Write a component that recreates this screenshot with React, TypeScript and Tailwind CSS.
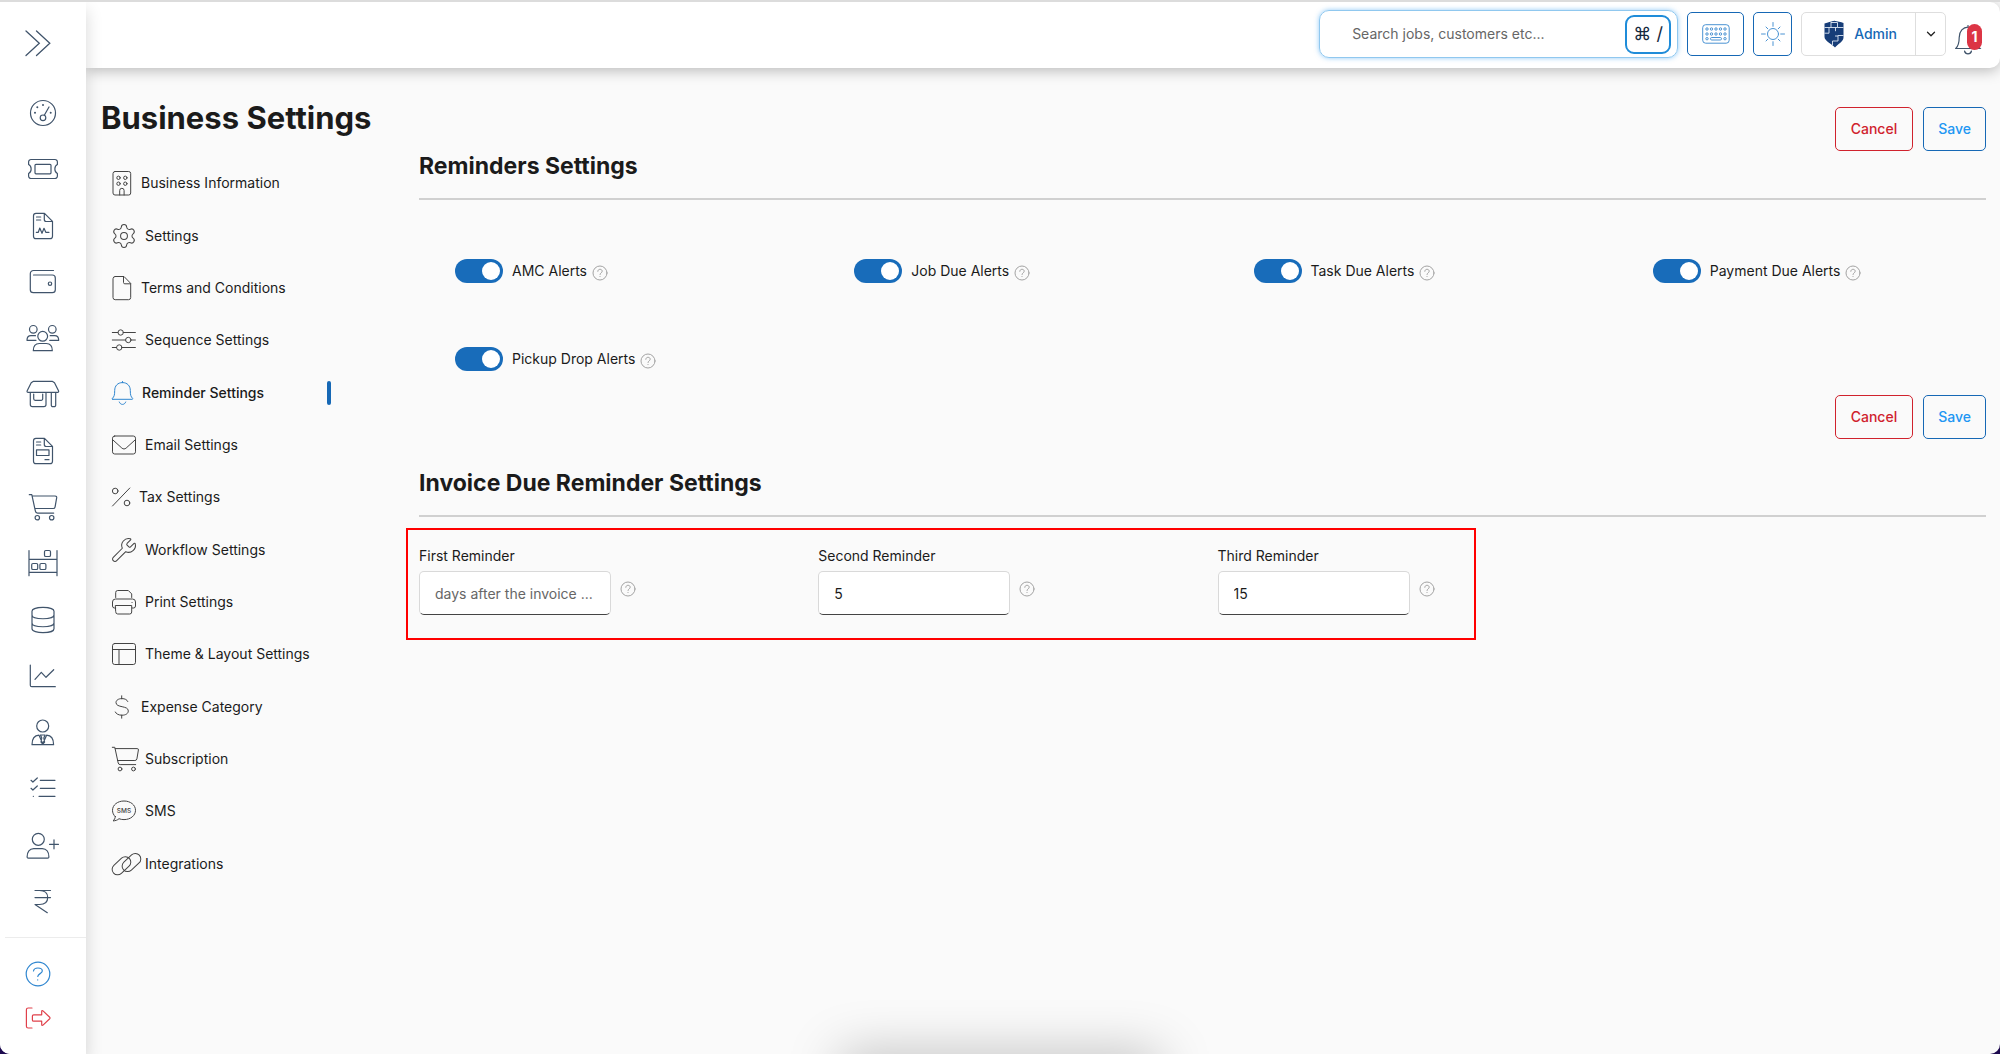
import { useState, type ReactNode } from 'react'
import { ChevronDown, Settings, Wrench } from 'lucide-react'

// Sidebar icons share a 32px box
function NavIcon({ children }: { children: ReactNode }) {
  return (
    <svg
      viewBox="0 0 32 32"
      className="w-8 h-8 overflow-visible"
      fill="none"
      stroke="currentColor"
      strokeWidth="1.2"
      strokeLinecap="round"
      strokeLinejoin="round"
      aria-hidden="true"
    >
      {children}
    </svg>
  )
}

function MenuIcon({ w = 24, children }: { w?: number; children: ReactNode }) {
  return (
    <svg
      width={w}
      height={24}
      viewBox={`0 0 ${w} 24`}
      className="shrink-0 overflow-visible"
      fill="none"
      stroke="currentColor"
      strokeWidth="1"
      strokeLinecap="round"
      strokeLinejoin="round"
      aria-hidden="true"
    >
      {children}
    </svg>
  )
}

const filePath = 'M9 3.3h8.5l8 8v14.9a2.5 2.5 0 0 1-2.5 2.5H9a2.5 2.5 0 0 1-2.5-2.5V5.8A2.5 2.5 0 0 1 9 3.3zM17.3 3.5v6a2 2 0 0 0 2 2h6M9.5 7h4.2M9.5 10h4.2'

const navItems = [
  {
    label: 'Dashboard',
    icon: (
      <>
        <circle cx="16" cy="16" r="12.5" />
        <circle cx="16" cy="20.8" r="2.8" />
        <path d="M17.3 18.2 22 10" />
        <g fill="currentColor" stroke="none">
          <circle cx="8" cy="15.7" r="1" />
          <circle cx="10.3" cy="10.2" r="1" />
          <circle cx="16" cy="8" r="1" />
          <circle cx="23.7" cy="15.7" r="1" />
        </g>
      </>
    ),
  },
  {
    label: 'Jobs',
    icon: (
      <>
        <path d="M4 6.5h24a2.4 2.4 0 0 1 2.4 2.4v2.6c-3.4 1.6-3.4 7.4 0 9v2.6a2.4 2.4 0 0 1-2.4 2.4H4a2.4 2.4 0 0 1-2.4-2.4v-2.6c3.4-1.6 3.4-7.4 0-9V8.9A2.4 2.4 0 0 1 4 6.5z" />
        <rect x="8" y="11.3" width="16" height="9.5" rx="1" />
      </>
    ),
  },
  {
    label: 'Quotations',
    icon: (
      <>
        <path d={filePath} />
        <path d="M9.3 22.3h2l1.5-4.3 2.2 5.3 2-5 1.8 4h3.2" />
      </>
    ),
  },
  {
    label: 'Payments',
    icon: (
      <>
        <path d="M26.5 4.5H6.5a3.2 3.2 0 0 0-3.2 3.2v16a3 3 0 0 0 3 3h19a3 3 0 0 0 3-3V12a3 3 0 0 0-3-3H6.5" />
        <circle cx="23" cy="17.7" r="1.7" />
      </>
    ),
  },
  {
    label: 'Customers',
    icon: (
      <>
        <circle cx="15.7" cy="14.3" r="4.9" />
        <circle cx="6.3" cy="7.3" r="3.8" />
        <circle cx="25.3" cy="7.3" r="3.8" />
        <path d="M6.3 28.7c0-5 2.5-7.2 6-7.2h7c3.5 0 6 2.2 6 7.2zM9 18.3H0c0-3 1.6-4.6 4-4.6h4.5M22.7 18.3h9c0-3-1.6-4.6-4-4.6h-4.5" />
      </>
    ),
  },
  {
    label: 'Outlets',
    icon: (
      <path d="M6.5 3.3h18.7l2.3 1.5 4 8c.4.9 0 1.6-1 1.6H1.2c-1 0-1.4-.7-1-1.6l4-8zM3.3 14.5v12a2.2 2.2 0 0 0 2.2 2.2h11.3a2.2 2.2 0 0 0 2.2-2.2v-12M6.7 16v4.8a1.5 1.5 0 0 0 1.5 1.5h6a1.5 1.5 0 0 0 1.5-1.5V16M24.3 14.5v12.7a1.5 1.5 0 0 0 1.5 1.5h1.4a1.5 1.5 0 0 0 1.5-1.5V14.5" />
    ),
  },
  {
    label: 'Invoices',
    icon: (
      <>
        <path d={filePath} />
        <path d="M9.5 14.9h12.5v5.6H9.5zM18 24.7h4" />
      </>
    ),
  },
  {
    label: 'Sales',
    icon: (
      <>
        <path d="M2.3 3.7h2.5l3.6 16.5a2.2 2.2 0 0 0 2.2 1.9h16.1M5.3 5h22.9a1.5 1.5 0 0 1 1.5 1.7l-1.6 9.1a2 2 0 0 1-2 1.7H7.9" />
        <circle cx="10.3" cy="26.7" r="2.2" />
        <circle cx="24.7" cy="26.7" r="2.2" />
      </>
    ),
  },
  {
    label: 'Inventory',
    icon: (
      <>
        <path d="M2 3.5v25.2M30 3.5v25.2M2 12.3h28M2 25.3h28" />
        <rect x="17.5" y="3.5" width="6" height="6" rx="1.3" />
        <rect x="4.7" y="16.5" width="6" height="6" rx="1.3" />
        <rect x="12.9" y="16.5" width="6" height="6" rx="1.3" />
      </>
    ),
  },
  {
    label: 'Data',
    icon: (
      <path d="M5 7.3c0-5.3 22-5.3 22 0v17.4c0 5.3-22 5.3-22 0zM5 11c0 5 22 5 22 0M5 19c0 5 22 5 22 0" />
    ),
  },
  {
    label: 'Reports',
    icon: <path d="M3.3 5v20.2a1.5 1.5 0 0 0 1.5 1.5h23.5M8 19.3l6.3-7 4.7 5 7.7-7.6" />,
  },
  {
    label: 'Employees',
    icon: (
      <>
        <circle cx="15.7" cy="10" r="6" />
        <path d="M5 28.7c0-6 2.3-9.2 7-9.5l3.8 8.5 3.8-8.5c4.7.3 7 3.5 7 9.5zM13.5 19h4.6l-1.3 3 .8 4-1.8 2.2-1.800-2.200.8-4z" />
      </>
    ),
  },
  {
    label: 'Tasks',
    icon: (
      <path d="M13.3 8.3H28M13.3 16.3H28M12 24.3h16M4 8.3 5.9 10l4.400-4M4 16.3 5.9 18l4.400-4M6.3 24.3h.1" />
    ),
  },
  {
    label: 'Leads',
    icon: (
      <>
        <circle cx="11.3" cy="10.3" r="6" />
        <path d="M1.3 29.2h19.4c.8 0 1.2-.4 1.2-1.2 0-5-2.5-8.3-6.6-8.3H6.7C2.6 19.7.1 23 .1 28c0 .8.4 1.2 1.2 1.2zM27 10.8v9M22.5 15.3h9" />
      </>
    ),
  },
  {
    label: 'Expenses',
    icon: <path d="M8 5.5h15.5M8 12.6h15.5M12.5 5.5c5 0 8.2 2.5 8.2 7s-3.2 7-8.2 7H8l12.3 8.2" />,
  },
]

const menuItems = [
  {
    label: 'Business Information',
    icon: (
      <MenuIcon w={20}>
        <rect x="1" y="0.5" width="17.7" height="23.5" rx="2" />
        <circle cx="6.5" cy="6.8" r="1.7" />
        <circle cx="13.3" cy="6.8" r="1.7" />
        <circle cx="6.5" cy="12.7" r="1.7" />
        <circle cx="13.3" cy="12.7" r="1.7" />
        <path d="M7.7 24v-4.5a2.2 2.2 0 0 1 4.4 0V24" />
      </MenuIcon>
    ),
  },
  {
    label: 'Settings',
    icon: <Settings width={24} height={24} viewBox="1.5 1.5 21 21" strokeWidth={0.9} className="shrink-0 overflow-visible" />,
  },
  {
    label: 'Terms and Conditions',
    icon: (
      <MenuIcon w={20}>
        <path d="M3.2.5h8.8l6.7 6.9v14.1a2.2 2.2 0 0 1-2.2 2.2H3.2A2.2 2.2 0 0 1 1 21.5V2.7A2.2 2.2 0 0 1 3.2.5zM11.5.7v5.8c0 .8.5 1.3 1.3 1.3h5.7" />
      </MenuIcon>
    ),
  },
  {
    label: 'Sequence Settings',
    icon: (
      <MenuIcon>
        <path d="M.3 4.5H6M11.4 4.5h12M.3 12h13.3M19 12h4.4M.3 19.5h4.3M10 19.5h13.4" />
        <circle cx="8.7" cy="4.5" r="2.7" />
        <circle cx="16.3" cy="12" r="2.7" />
        <circle cx="7.3" cy="19.5" r="2.7" />
      </MenuIcon>
    ),
  },
  {
    label: 'Reminder Settings',
    active: true,
    icon: (
      <MenuIcon w={21}>
        <path d="M10.5.5v1.2M.8 18.3h19.4c.6 0 .8-.5.4-.9-1.9-1.9-2.3-3.7-2.3-7.8 0-4.8-3-8-7.8-8s-7.8 3.2-7.8 8c0 4.1-.4 5.9-2.3 7.8-.4.4-.2.9.4.9zM7.3 21c.6 1.500 1.700 2.400 3.200 2.400s2.600-.9 3.200-2.400" />
      </MenuIcon>
    ),
  },
  {
    label: 'Email Settings',
    icon: (
      <MenuIcon>
        <rect x="0.5" y="3" width="23" height="18" rx="2.2" />
        <path d="m1.3 7.3 8.5 7.7c1.5 1.3 2.9 1.3 4.4 0l8.5-7.7" />
      </MenuIcon>
    ),
  },
  {
    label: 'Tax Settings',
    icon: (
      <MenuIcon w={18}>
        <circle cx="3.2" cy="6" r="2.8" />
        <circle cx="15" cy="18" r="2.8" />
        <path d="M.5 21 17.8 3" />
      </MenuIcon>
    ),
  },
  {
    label: 'Workflow Settings',
    icon: <Wrench width={24} height={24} viewBox="1.5 1.5 21 21" strokeWidth={0.9} className="shrink-0 overflow-visible" />,
  },
  {
    label: 'Print Settings',
    icon: (
      <MenuIcon>
        <path d="M3.7 7.5v-5A2 2 0 0 1 5.7.5h10.6l3.4 3.4v3.6M3.7 18H2.5a2 2 0 0 1-2-2v-4a3 3 0 0 1 3-3h17a3 3 0 0 1 3 3v4a2 2 0 0 1-2 2h-1.2M3.7 15.5h16V22a2 2 0 0 1-2 2h-12a2 2 0 0 1-2-2zM20 12.5h.1" />
      </MenuIcon>
    ),
  },
  {
    label: 'Theme & Layout Settings',
    icon: (
      <MenuIcon>
        <rect x="0.5" y="1.5" width="23" height="21" rx="2.2" />
        <path d="M.5 7.5h23M7 7.5v15" />
      </MenuIcon>
    ),
  },
  {
    label: 'Expense Category',
    icon: (
      <MenuIcon w={20}>
        <path d="M9.7.8v3M9.7 20.2v3M15.8 6.5c-.7-1.8-3-2.9-5.8-2.9-3.4 0-6 1.5-6 4 0 5.5 12.3 2.7 12.3 8.3 0 2.7-2.7 4.3-6.3 4.3-3.3 0-5.9-1.2-6.7-3.2" />
      </MenuIcon>
    ),
  },
  {
    label: 'Subscription',
    icon: (
      <MenuIcon>
        <path d="M.3.3h2.5l3.4 15.7a2 2 0 0 0 2 1.6h15.5M3.2 1.6h22a1.2 1.2 0 0 1 1.2 1.4l-1.5 8.9a2 2 0 0 1-2 1.6H5.5" />
        <circle cx="8" cy="22" r="1.9" />
        <circle cx="21.5" cy="22" r="1.9" />
      </MenuIcon>
    ),
  },
  {
    label: 'SMS',
    icon: (
      <MenuIcon>
        <path d="M3.3 17.7C1.5 16 .5 13.8.5 11.3.5 6 5.5 2 12 2s11.5 4 11.5 9.3-5 9.3-11.5 9.3c-1.9 0-3.5-.3-5-.9-1.5 1.4-3.5 2.1-6 2.2 1.4-1.1 2.2-2.6 2.3-4.2z" />
        <text x="12" y="13.7" textAnchor="middle" fontSize="6.5" fontWeight="500" fill="currentColor" stroke="none">SMS</text>
      </MenuIcon>
    ),
  },
  {
    label: 'Integrations',
    icon: (
      <MenuIcon>
        <rect x="-1.3" y="8.2" width="21.5" height="11" rx="5.5" transform="rotate(-43 9.5 13.7)" />
        <rect x="8.7" y="5" width="21.5" height="11" rx="5.5" transform="rotate(-43 19.5 10.5)" />
      </MenuIcon>
    ),
  },
]

const alerts = ['AMC Alerts', 'Job Due Alerts', 'Task Due Alerts', 'Payment Due Alerts', 'Pickup Drop Alerts']

function HelpIcon() {
  return (
    <svg viewBox="0 0 16 16" className="w-4 h-4 shrink-0 text-[#a3a3a3]" fill="none" stroke="currentColor" strokeLinecap="round" role="img" aria-label="Help">
      <circle cx="8" cy="8" r="7" />
      <path d="M5.8 6.3c.1-1.3 1-2 2.2-2s2.2.7 2.2 1.9c0 1.7-2.2 1.6-2.2 3.3M8 11.5v.1" />
    </svg>
  )
}

function Toggle({ label }: { label: string }) {
  const [on, setOn] = useState(true)
  return (
    <div className="flex items-center h-6">
      <label className="flex items-center gap-[9px] cursor-pointer">
        <input type="checkbox" role="switch" checked={on} onChange={e => setOn(e.target.checked)} className="peer sr-only" />
        <span className="flex items-center w-12 h-6 px-[3px] rounded-full bg-gray-300 peer-checked:bg-[#186cba] peer-checked:justify-end">
          <span className="w-[18px] h-[18px] rounded-full bg-white" />
        </span>
        {label}
      </label>
      <span className="pl-[5px] pt-1">
        <HelpIcon />
      </span>
    </div>
  )
}

function FormActions() {
  return (
    <div className="flex justify-end gap-[10px] font-medium">
      <button type="button" className="h-11 px-[15px] rounded-[5px] border border-[#d0222d] text-[#d0222d]">Cancel</button>
      <button type="button" className="h-11 px-[14px] rounded-[5px] border border-[#1668b5] text-[#2196f3]">Save</button>
    </div>
  )
}

function ReminderField({ id, label, value, placeholder }: { id: string; label: string; value: string; placeholder?: string }) {
  return (
    <div className="pt-[18px] pb-[25px]">
      <label htmlFor={id} className="block leading-5 mb-[5px]">{label}</label>
      <div className="flex gap-[9px]">
        <input
          id={id}
          defaultValue={value}
          placeholder={placeholder}
          className="w-48 h-11 px-[15px] rounded-[5px] bg-white border border-[#d9d9d9] border-b-[#444] text-ellipsis placeholder:text-[#666] outline-none"
        />
        <span className="pt-[10px]">
          <HelpIcon />
        </span>
      </div>
    </div>
  )
}

function Sidebar() {
  return (
    <aside className="relative z-20 flex flex-col w-[86px] shrink-0 bg-white text-[#40546b] shadow-[0_8px_16px_rgba(0,0,0,0.16)]">
      <button type="button" aria-label="Expand menu" className="self-start ml-6 mt-[27px] mb-7">
        <svg viewBox="0 0 28 28" className="w-7 h-7" fill="none" stroke="currentColor" strokeWidth="1.3" strokeLinecap="round" aria-hidden="true">
          <path d="m2 2 13.3 12.2L2 26.5M12.5 2l13.3 12.2L12.5 26.5" />
        </svg>
      </button>
      <nav aria-label="Main" className="flex flex-col flex-1">
        {navItems.map(item => (
          <a key={item.label} href="#" aria-label={item.label} className="flex flex-1 items-center justify-center">
            <NavIcon>{item.icon}</NavIcon>
          </a>
        ))}
      </nav>
      <div className="flex flex-col gap-4 ml-[5px] mt-2 pt-[22px] pb-[22px] pl-[19px] border-t border-[#ececec]">
        <a href="#" aria-label="Help" className="text-[#2f86d0]">
          <svg viewBox="0 0 28 28" className="w-7 h-7" fill="none" stroke="currentColor" strokeWidth="1.2" strokeLinecap="round" aria-hidden="true">
            <circle cx="14" cy="14" r="11.8" />
            <path d="M9.5 11c.3-2 2-3 4.4-3s4.400 1.200 4.400 3c0 2.700-4.500 2.600-4.500 5.500M13.7 19.8v.1" />
          </svg>
        </a>
        <a href="#" aria-label="Log out" className="text-[#e0404a]">
          <svg viewBox="0 0 28 28" className="w-7 h-7" fill="none" stroke="currentColor" strokeWidth="1.2" strokeLinecap="round" strokeLinejoin="round" aria-hidden="true">
            <path d="M8 4H4.2A1.8 1.8 0 0 0 2.4 5.8v16.4A1.8 1.8 0 0 0 4.2 24H8M9.7 10.8h8V7.5c0-1 .6-1.2 1.3-.6l6.7 6.4c.5.5.5.9 0 1.4L19 21.1c-.7.6-1.3.4-1.3-.6v-3.3h-8a1.3 1.3 0 0 1-1.3-1.3v-3.8a1.3 1.3 0 0 1 1.3-1.3z" />
          </svg>
        </a>
      </div>
    </aside>
  )
}

function Header() {
  return (
    <header className="relative z-10 flex items-center justify-end gap-[9px] h-[66px] pr-[18px] pb-[2px] bg-white rounded-r-[10px] shadow-[0_3px_14px_rgba(0,0,0,0.25)]">
      <div className="flex items-center w-[359px] h-12 pl-8 pr-[6px] rounded-[10px] border border-[#90c8ef] shadow-[0_0_5px_rgba(33,150,243,0.5)]">
        <input
          type="search"
          aria-label="Search"
          placeholder="Search jobs, customers etc..."
          className="flex-1 min-w-0 outline-none placeholder:text-[#666]"
        />
        <kbd className="flex items-center justify-center w-[46px] h-[39px] rounded-[9px] border-2 border-[#1f8cd9] text-lg font-[Inter,'DejaVu_Sans',sans-serif] text-[#15293d]">⌘ /</kbd>
      </div>
      <button type="button" aria-label="Keyboard shortcuts" className="flex items-center justify-center w-[57px] h-11 rounded-[5px] border border-[#1668b5] text-[#4a93d3]">
        <svg viewBox="0 0 28 20" className="w-7 h-5" fill="none" stroke="currentColor" aria-hidden="true">
          <rect x="0.7" y="0.7" width="26.5" height="18.5" rx="3" />
          {[5, 10].map(y =>
            [5, 9.5, 14, 18.5, 23].map(x => <circle key={`${x}-${y}`} cx={x} cy={y} r="1.2" />)
          )}
          <circle cx="5" cy="14.7" r="1.2" />
          <circle cx="23" cy="14.7" r="1.2" />
          <rect x="8.5" y="13.5" width="11" height="2.5" rx="1.2" />
        </svg>
      </button>
      <button type="button" aria-label="Light theme" className="flex items-center justify-center w-[39px] h-11 rounded-[5px] border border-[#1668b5] text-[#4a93d3]">
        <svg viewBox="0 0 24 24" className="w-6 h-6" fill="none" stroke="currentColor" strokeLinecap="round" aria-hidden="true">
          <circle cx="12" cy="12" r="5.5" />
          <path d="M12 .5v3.8M12 19.7v3.8M.5 12h3.8M19.7 12h3.8M5 5l1.8 1.8M17.2 17.2 19 19M5 19l1.8-1.8M17.2 6.8 19 5" />
        </svg>
      </button>
      <div className="flex h-11 rounded-[5px] border border-[#dedede]">
        <button type="button" className="flex items-center gap-[10px] pl-[22px] pr-[18px] font-medium text-[#1668b5]">
          <svg viewBox="0 0 20 28" className="w-5 h-7" aria-hidden="true">
            <path fill="#173d78" d="M.5 3.5C4 3 7 1 10.5.8 13 1.5 17 2 19.5 3v14.5c0 4-5.5 6.5-8.5 10C8 24 .5 21 .5 17z" />
            <path fill="none" stroke="#dfe8f4" strokeWidth="0.9" d="M.5 7.500H7M7 1.500v6M7 2.500h6.500v5H7M13.500 7.500h6M5 7.500v5.700H.5M11.500 7.500v3.700M14 15.500h5.500M14 15.500v5.500M8.500 21H14M8.500 21v4M11 16h3" />
          </svg>
          Admin
        </button>
        <button type="button" aria-label="Open account menu" className="flex items-center justify-center w-[30px] border-l border-[#dedede] text-[#222]">
          <ChevronDown size={14} strokeWidth={2.2} />
        </button>
      </div>
      <button type="button" aria-label="Notifications" className="relative pt-[11px] text-[#40546b]">
        <svg viewBox="0 0 27 30" className="w-[27px] h-[30px]" fill="none" stroke="currentColor" strokeWidth="1.2" strokeLinecap="round" aria-hidden="true">
          <path d="M13 .5v1.7M.8 23.5H25c-2.5-2.5-3.2-5.5-3.2-11 0-6.5-4-10.3-8.8-10.3s-8.8 3.8-8.8 10.3c0 5.5-.8 8.5-3.4 11zM9.5 26c.5 2 1.8 2.8 3.5 2.8s3-.8 3.5-2.8" />
        </svg>
        <span className="absolute right-0 top-[10px] flex items-center justify-center w-[15px] h-[26px] rounded-full bg-[#dc3545] text-sm font-bold text-white">1</span>
      </button>
    </header>
  )
}

export default function App() {
  return (
    <div className="h-screen bg-[#1d0a4f] overflow-hidden font-[Inter,'Liberation_Sans',sans-serif] text-sm text-[#1b1b1b]">
      <div className="relative flex h-full overflow-hidden bg-[#fafafa] rounded-b-[10px] border-t-2 border-[#dcdcdc]">
        <Sidebar />
        <div className="flex flex-col flex-1 min-w-0">
          <Header />
          <main className="flex flex-1 pl-[15px] pr-[14px]">
            <div className="w-[318px] shrink-0 pt-[30px]">
              <h1 className="text-[31px] leading-10 font-bold whitespace-nowrap">Business Settings</h1>
              <nav aria-label="Settings" className="grid auto-rows-fr w-[230px] min-h-[733px] mt-[19px] pl-[11px]">
                {menuItems.map(item => (
                  <a key={item.label} href="#" className="flex items-center gap-[9px] whitespace-nowrap">
                    <span className={item.active ? 'text-[#2f86d0]' : 'text-[#444]'}>{item.icon}</span>
                    <span className={item.active ? 'flex-1 font-medium' : 'flex-1'}>{item.label}</span>
                    {item.active && <span className="w-1 h-6 rounded-full bg-[#1668b5]" />}
                  </a>
                ))}
              </nav>
            </div>
            <div className="flex-1 min-w-0 pt-[39px]">
              <FormActions />
              <h2 className="text-[23px] leading-[30px] font-bold">Reminders Settings</h2>
              <hr className="mt-[17px] border-t-2 border-[#d0d0d0]" />
              <div className="grid grid-cols-4 gap-x-[30px] gap-y-16 pl-9 pt-[59px] pb-6 -mr-9">
                {alerts.map(label => (
                  <Toggle key={label} label={label} />
                ))}
              </div>
              <FormActions />
              <h2 className="mt-[29px] text-[23px] leading-[30px] font-bold">Invoice Due Reminder Settings</h2>
              <hr className="mt-[17px] border-t-2 border-[#d0d0d0]" />
              <div className="relative grid grid-cols-4 gap-x-[30px] mt-[11px]">
                <ReminderField id="first" label="First Reminder" value="" placeholder="days after the invoice ..." />
                <ReminderField id="second" label="Second Reminder" value="5" />
                <ReminderField id="third" label="Third Reminder" value="15" />
                <div className="absolute inset-y-0 -left-[13px] right-[510px] border-2 border-[#ff0000] pointer-events-none" />
              </div>
            </div>
          </main>
        </div>
        <div className="absolute -bottom-10 left-1/2 -translate-x-1/2 w-[320px] h-10 shadow-[0_0_52px_rgba(0,0,0,0.26)]" />
      </div>
    </div>
  )
}
